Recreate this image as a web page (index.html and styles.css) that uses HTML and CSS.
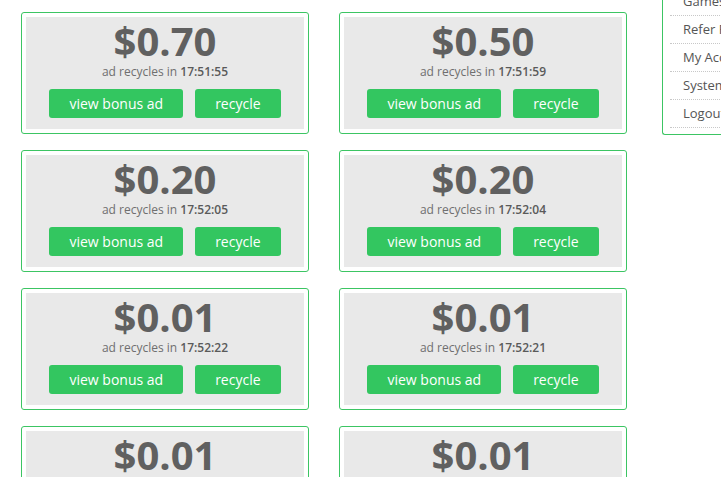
FILE: index.html
```html
<!DOCTYPE html>
<html>
<head>
<meta charset="utf-8">
<link rel="stylesheet" href="styles.css">
</head>
<body>
<div class="page">
  <main class="ads">
    <div class="card"><div class="panel"><div class="price">$0.70</div><div class="timer">ad recycles in <b>17:51:55</b></div><div class="actions"><a class="btn">view bonus ad</a><a class="btn">recycle</a></div></div></div>
    <div class="card"><div class="panel"><div class="price">$0.50</div><div class="timer">ad recycles in <b>17:51:59</b></div><div class="actions"><a class="btn">view bonus ad</a><a class="btn">recycle</a></div></div></div>
    <div class="card"><div class="panel"><div class="price">$0.20</div><div class="timer">ad recycles in <b>17:52:05</b></div><div class="actions"><a class="btn">view bonus ad</a><a class="btn">recycle</a></div></div></div>
    <div class="card"><div class="panel"><div class="price">$0.20</div><div class="timer">ad recycles in <b>17:52:04</b></div><div class="actions"><a class="btn">view bonus ad</a><a class="btn">recycle</a></div></div></div>
    <div class="card"><div class="panel"><div class="price">$0.01</div><div class="timer">ad recycles in <b>17:52:22</b></div><div class="actions"><a class="btn">view bonus ad</a><a class="btn">recycle</a></div></div></div>
    <div class="card"><div class="panel"><div class="price">$0.01</div><div class="timer">ad recycles in <b>17:52:21</b></div><div class="actions"><a class="btn">view bonus ad</a><a class="btn">recycle</a></div></div></div>
    <div class="card"><div class="panel"><div class="price">$0.01</div><div class="timer">ad recycles in <b>17:52:30</b></div><div class="actions"><a class="btn">view bonus ad</a><a class="btn">recycle</a></div></div></div>
    <div class="card"><div class="panel"><div class="price">$0.01</div><div class="timer">ad recycles in <b>17:52:29</b></div><div class="actions"><a class="btn">view bonus ad</a><a class="btn">recycle</a></div></div></div>
  </main>
  <aside class="side">
    <ul class="menu">
      <li>Games</li>
      <li>Refer Friends</li>
      <li>My Account</li>
      <li>System Status</li>
      <li>Logout</li>
    </ul>
  </aside>
</div>
</body>
</html>
```
FILE: styles.css
```css
html, body {
  margin: 0;
  padding: 0;
  background: #fff;
  overflow: hidden;
  height: 477px;
}
body {
  font-family: "Open Sans", "Liberation Sans", sans-serif;
  color: #555;
}
.page {
  display: flex;
  align-items: flex-start;
  width: 1000px;
}
.ads {
  display: grid;
  grid-template-columns: 288px 288px;
  column-gap: 30px;
  row-gap: 16px;
  padding: 12px 0 0 21px;
}
.card {
  box-sizing: border-box;
  border: 1px solid #3cc563;
  border-radius: 3px;
  padding: 4px;
  background: #fff;
}
.panel {
  background: #e9e9e9;
  padding: 2px 0 11px;
  text-align: center;
}
.price {
  font-size: 40px;
  font-weight: 700;
  line-height: 44px;
  color: #606060;
}
.timer {
  margin-top: 1px;
  font-size: 12px;
  line-height: 16px;
  color: #6f6f6f;
}
.timer b {
  font-weight: 600;
  color: #5a5a5a;
}
.actions {
  display: flex;
  justify-content: center;
  gap: 12px;
  margin-top: 9px;
}
.btn {
  display: block;
  height: 29px;
  line-height: 29px;
  padding: 0 20px;
  background: #33c660;
  color: #fff;
  font-size: 14px;
  border-radius: 3px;
}
.side {
  margin-left: 35px;
  margin-top: -12px;
  width: 220px;
  border-left: 1px solid #3cc563;
  border-bottom: 1px solid #3cc563;
  border-bottom-left-radius: 3px;
  padding: 0 0 6px 7px;
}
.menu {
  list-style: none;
  margin: 0;
  padding: 0;
}
.menu li {
  height: 27px;
  line-height: 27px;
  padding-left: 13px;
  font-size: 13px;
  color: #555;
  border-bottom: 1px dotted #c8c8c8;
  white-space: nowrap;
}
```
